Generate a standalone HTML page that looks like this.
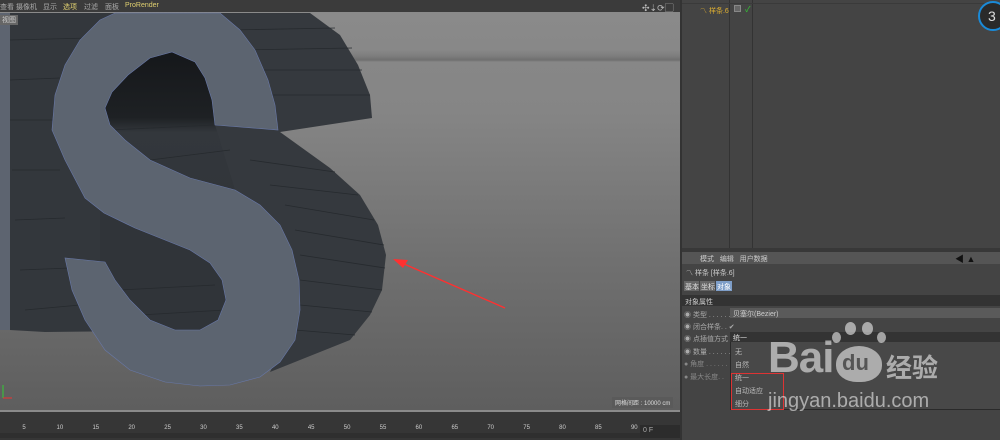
<!DOCTYPE html>
<html><head><meta charset="utf-8"><style>
*{margin:0;padding:0;box-sizing:border-box}
body{width:1000px;height:440px;overflow:hidden;background:#444;font-family:"Liberation Sans","Noto Sans CJK SC",sans-serif;font-size:7px;color:#bbb;position:relative}
.a{position:absolute;white-space:nowrap}
</style></head><body>
<div class="a" style="left:0;top:0;width:680px;height:12px;background:#3b3b3b"></div>
<div class="a" style="left:0;top:12px;width:680px;height:398px;background:linear-gradient(#8a8a8a 0,#888 38px,#7d7d7d 44px,#6f6f6f 48px,#878787 50px,#858585 100px,#707070 250px,#5e5e5e 398px)"></div>
<div class="a" style="left:0;top:2px;color:#aaa">查看</div>
<div class="a" style="left:16px;top:2px;color:#aaa">摄像机</div>
<div class="a" style="left:43px;top:2px;color:#aaa">显示</div>
<div class="a" style="left:63px;top:2px;color:#e0d070">选项</div>
<div class="a" style="left:84px;top:2px;color:#aaa">过滤</div>
<div class="a" style="left:105px;top:2px;color:#aaa">面板</div>
<div class="a" style="left:125px;top:2px;color:#e0d070">ProRender</div>
<div class="a" style="left:642px;top:1px;color:#bbb;font-size:9px">✣⇣⟳▢</div>
<svg class="a" style="left:0;top:0" width="680" height="410">
<defs><linearGradient id="h" x1="0" y1="0" x2="0" y2="1"><stop offset="0" stop-color="#15171a"/><stop offset="0.45" stop-color="#1e2124"/><stop offset="0.55" stop-color="#33373c"/><stop offset="1" stop-color="#31353a"/></linearGradient></defs>
<polygon points="0,13 10,13 10,330 0,330" fill="#5d6470"/>
<polygon points="10,13 200,13 240,60 240,330 45,332 10,330" fill="#33373c"/>
<rect x="100" y="50" width="140" height="150" fill="url(#h)"/>
<rect x="100" y="200" width="140" height="140" fill="#303439"/>
<polygon points="200,13 310,13 340,35 358,65 370,95 372,118 280,132 330,168 360,195 378,225 386,255 382,290 370,315 350,340 270,372 300,310 235,190 215,125" fill="#35393e"/>
<g stroke="#262a2e" stroke-width="0.8">
<line x1="230" y1="30" x2="335" y2="28"/><line x1="240" y1="50" x2="352" y2="48"/><line x1="250" y1="70" x2="362" y2="70"/><line x1="260" y1="95" x2="370" y2="95"/>
<line x1="250" y1="160" x2="335" y2="172"/><line x1="270" y1="185" x2="358" y2="195"/><line x1="285" y1="205" x2="374" y2="220"/><line x1="295" y1="230" x2="384" y2="245"/><line x1="300" y1="255" x2="385" y2="268"/><line x1="300" y1="280" x2="382" y2="290"/><line x1="300" y1="305" x2="372" y2="312"/><line x1="295" y1="330" x2="355" y2="335"/>
<line x1="10" y1="40" x2="90" y2="38"/><line x1="10" y1="80" x2="60" y2="78"/><line x1="10" y1="120" x2="55" y2="120"/><line x1="12" y1="170" x2="60" y2="170"/><line x1="15" y1="220" x2="65" y2="218"/><line x1="20" y1="270" x2="70" y2="268"/><line x1="25" y1="310" x2="80" y2="305"/>
<line x1="110" y1="130" x2="215" y2="125"/><line x1="150" y1="160" x2="230" y2="150"/><line x1="120" y1="290" x2="215" y2="285"/><line x1="140" y1="315" x2="225" y2="310"/>
</g>
<polygon points="52,130 55,95 65,65 80,40 100,20 115,13 220,13 240,30 255,50 268,80 275,105 278,130 215,125 212,100 205,78 195,62 172,52 150,58 128,75 112,92 105,108 110,125 125,140 150,160 190,178 235,190 260,205 280,225 292,250 299,280 300,310 295,340 280,362 260,377 230,385 200,386 165,382 130,370 105,350 85,320 72,290 65,258 105,262 115,280 130,300 150,320 175,330 200,330 218,320 226,300 222,280 210,263 190,250 160,238 135,228 104,213 85,198 65,160" fill="#5c6470" stroke="#6878a8" stroke-width="0.6"/>
<line x1="395" y1="260" x2="505" y2="308" stroke="#ff3030" stroke-width="1.5"/>
<polygon points="393,259 408,260 403,268" fill="#ff3030"/>
<line x1="3" y1="385" x2="3" y2="398" stroke="#3c3" /><line x1="3" y1="398" x2="12" y2="398" stroke="#e33"/>
</svg>
<div class="a" style="left:0;top:15px;background:#666;color:#ccc;padding:0 2px">视图</div>
<div class="a" style="left:612px;top:397px;font-size:6px;color:#ddd;background:#5a5a5a;padding:1px 3px">网格间距 : 10000 cm</div>
<div class="a" style="left:0;top:410px;width:680px;height:2px;background:#8a8a8a"></div>
<div class="a" style="left:0;top:412px;width:680px;height:28px;background:#363636"></div>
<div class="a" style="left:0;top:433px;width:640px;height:5px;background:#2f2f2f"></div>
<div id="tl"></div>
<div class="a" style="left:640px;top:425px;width:40px;height:13px;background:#2c2c2c;color:#aaa;padding:2px 3px;font-size:7px">0 F</div>
<div class="a" style="left:680px;top:0;width:320px;height:440px;background:#444"></div>
<div class="a" style="left:680px;top:0;width:2px;height:440px;background:#333"></div>
<div class="a" style="left:729px;top:0;width:1px;height:248px;background:#333"></div>
<div class="a" style="left:752px;top:0;width:1px;height:248px;background:#333"></div>
<div class="a" style="left:682px;top:3px;width:318px;height:1px;background:#3a3a3a"></div>
<div class="a" style="left:700px;top:6px;color:#e0b030">〽 样条.6</div>
<div class="a" style="left:734px;top:5px;width:7px;height:7px;border:1px solid #888;background:#666"></div>
<div class="a" style="left:745px;top:4px;color:#3c3;font-size:8px">✓</div>
<div class="a" style="left:978px;top:1px;width:30px;height:30px;border-radius:50%;border:2px solid #1a8ad8;background:#2a2a2a;color:#ddd;font-size:14px;padding:5px 0 0 8px">3</div>
<div class="a" style="left:682px;top:248px;width:318px;height:4px;background:#383838"></div>
<div class="a" style="left:682px;top:252px;width:318px;height:12px;background:#555;padding:2px 0 0 18px;color:#ccc">模式 &nbsp; 编辑 &nbsp; 用户数据</div>
<div class="a" style="left:955px;top:252px;color:#111;font-size:9px">◀ ▲</div>
<div class="a" style="left:686px;top:268px;color:#ccc">〽 样条 [样条.6]</div>
<div class="a" style="left:684px;top:281px;width:15px;height:10px;background:#666;color:#ddd;padding:1px">基本</div>
<div class="a" style="left:700px;top:281px;width:15px;height:10px;background:#666;color:#ddd;padding:1px">坐标</div>
<div class="a" style="left:716px;top:281px;width:16px;height:10px;background:#7e9ec8;color:#fff;padding:1px">对象</div>
<div class="a" style="left:682px;top:295px;width:318px;height:11px;background:#333;color:#ccc;padding:2px 3px">对象属性</div>
<div class="a" style="left:684px;top:310px;color:#aaa">◉ 类型 . . . . . .</div>
<div class="a" style="left:730px;top:308px;width:270px;height:10px;background:#5a5a5a;color:#ccc;padding:1px 3px">贝塞尔(Bezier)</div>
<div class="a" style="left:684px;top:322px;color:#aaa">◉ 闭合样条. . ✔</div>
<div class="a" style="left:684px;top:334px;color:#aaa">◉ 点插值方式</div>
<div class="a" style="left:730px;top:332px;width:270px;height:10px;background:#333;color:#ddd;padding:1px 3px">统一</div>
<div class="a" style="left:684px;top:347px;color:#aaa">◉ 数量 . . . . . .</div>
<div class="a" style="left:684px;top:359px;color:#888">● 角度 . . . . . .</div>
<div class="a" style="left:684px;top:372px;color:#888">● 最大长度. .</div>
<div class="a" style="left:730px;top:342px;width:270px;height:68px;background:#484848;border-left:1px solid #2a2a2a;border-bottom:1px solid #2a2a2a"></div>
<div class="a" style="left:735px;top:347px;color:#bbb">无</div>
<div class="a" style="left:735px;top:360px;color:#bbb">自然</div>
<div class="a" style="left:735px;top:373px;color:#bbb">统一</div>
<div class="a" style="left:735px;top:386px;color:#bbb">自动适应</div>
<div class="a" style="left:735px;top:399px;color:#bbb">细分</div>
<div class="a" style="left:731px;top:373px;width:53px;height:37px;border:1px solid #d33"></div>
<div class="a" style="left:768px;top:333px;font-size:44px;font-weight:bold;color:rgba(255,255,255,.55);letter-spacing:-1px">Bai</div>
<div class="a" style="left:836px;top:346px;width:46px;height:36px;border-radius:50% 50% 45% 45%;background:rgba(255,255,255,.55);color:#555;font-size:22px;font-weight:bold;padding:4px 0 0 6px">du</div>
<div class="a" style="left:832px;top:332px;width:9px;height:11px;border-radius:50%;background:rgba(255,255,255,.55)"></div>
<div class="a" style="left:845px;top:322px;width:11px;height:13px;border-radius:50%;background:rgba(255,255,255,.55)"></div>
<div class="a" style="left:862px;top:322px;width:11px;height:13px;border-radius:50%;background:rgba(255,255,255,.55)"></div>
<div class="a" style="left:877px;top:332px;width:9px;height:11px;border-radius:50%;background:rgba(255,255,255,.55)"></div>
<div class="a" style="left:886px;top:348px;font-size:26px;font-weight:bold;color:rgba(255,255,255,.55)">经验</div>
<div class="a" style="left:768px;top:390px;font-size:20px;color:rgba(255,255,255,.55)">jingyan.baidu.com</div>
<script>
var s='';for(var i=1;i<=18;i++){var x=24+(i-1)*35.9;s+='<div class="a" style="left:'+(x-5)+'px;top:425px;width:10px;text-align:center;font-size:6px;color:#ccc">'+(i*5)+'</div>';}
document.getElementById('tl').innerHTML=s;
</script>
</body></html>
